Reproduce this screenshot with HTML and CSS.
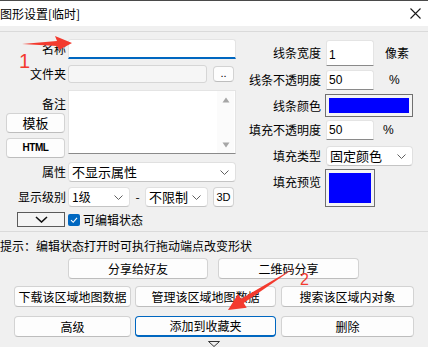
FILE: index.html
```html
<!DOCTYPE html>
<html lang="zh-CN">
<head>
<meta charset="utf-8">
<title>图形设置[临时]</title>
<link rel="stylesheet" href="styles.css">
</head>
<body>
<div class="window">
  <div class="titlebar">
    <span class="title">图形设置[临时]</span>
    <svg class="close" width="11" height="11" viewBox="0 0 11 11"><path d="M0.5 0.5L10.5 10.5M10.5 0.5L0.5 10.5" stroke="#1a1a1a" stroke-width="1.1" fill="none"/></svg>
  </div>
  <div class="content">
    <div class="group">
      <div class="left">
        <div class="row r-name">
          <span class="lbl">名称</span>
          <div class="field name-field"></div>
        </div>
        <div class="row r-folder">
          <span class="lbl">文件夹</span>
          <div class="field folder-field"></div>
          <button class="btn dots">..</button>
        </div>
        <div class="row r-note">
          <div class="note-side">
            <span class="lbl note-lbl">备注</span>
            <button class="btn side-btn">模板</button>
            <button class="btn side-btn html-btn">HTML</button>
          </div>
          <div class="textarea">
            <div class="ta-body"></div>
            <div class="scroll">
              <svg width="8" height="6" viewBox="0 0 8 6"><path d="M4 0.5L7.5 5.5H0.5Z" fill="#a6a6a6"/></svg>
              <svg width="8" height="6" viewBox="0 0 8 6"><path d="M4 5.5L7.5 0.5H0.5Z" fill="#a6a6a6"/></svg>
            </div>
          </div>
        </div>
        <div class="row r-attr">
          <span class="lbl">属性</span>
          <div class="select attr-select"><span>不显示属性</span><svg class="chev" width="9" height="5" viewBox="0 0 9 5"><path d="M0.5 0.5L4.5 4.5L8.5 0.5" stroke="#606060" fill="none"/></svg></div>
        </div>
        <div class="row r-level">
          <span class="lbl">显示级别</span>
          <div class="select level-select"><span>1级</span><svg class="chev" width="9" height="5" viewBox="0 0 9 5"><path d="M0.5 0.5L4.5 4.5L8.5 0.5" stroke="#606060" fill="none"/></svg></div>
          <span class="dash">-</span>
          <div class="select limit-select"><span>不限制</span><svg class="chev" width="9" height="5" viewBox="0 0 9 5"><path d="M0.5 0.5L4.5 4.5L8.5 0.5" stroke="#606060" fill="none"/></svg></div>
          <button class="btn btn-3d">3D</button>
        </div>
        <div class="row r-edit">
          <button class="toggle"><svg width="13" height="7" viewBox="0 0 13 7"><path d="M1 1L6.5 6L12 1" stroke="#111" stroke-width="1.6" fill="none"/></svg></button>
          <span class="check"><svg width="12" height="12" viewBox="0 0 12 12"><path d="M3 6.2L5.2 8.3L9 3.8" stroke="#fff" stroke-width="1.1" fill="none"/></svg></span>
          <span class="check-lbl">可编辑状态</span>
        </div>
      </div>
      <div class="right">
        <div class="rrow rr1">
          <span class="rlbl">线条宽度</span>
          <div class="field num tall">1</div>
          <span class="unit u-px">像素</span>
        </div>
        <div class="rrow rr2">
          <span class="rlbl">线条不透明度</span>
          <div class="field num">50</div>
          <span class="unit u-pct1">%</span>
        </div>
        <div class="rrow rr3">
          <span class="rlbl">线条颜色</span>
          <div class="swatch color-swatch"><div class="fill"></div></div>
        </div>
        <div class="rrow rr4">
          <span class="rlbl">填充不透明度</span>
          <div class="field num">50</div>
          <span class="unit u-pct2">%</span>
        </div>
        <div class="rrow rr5">
          <span class="rlbl">填充类型</span>
          <div class="select type-select"><span>固定颜色</span><svg class="chev" width="9" height="5" viewBox="0 0 9 5"><path d="M0.5 0.5L4.5 4.5L8.5 0.5" stroke="#606060" fill="none"/></svg></div>
        </div>
        <div class="rrow rr6">
          <span class="rlbl preview-lbl">填充预览</span>
          <div class="swatch preview-swatch"><div class="fill"></div></div>
        </div>
      </div>
    </div>
    <div class="hint">提示：编辑状态打开时可执行拖动端点改变形状</div>
    <div class="btn-row row1">
      <button class="btn b-share">分享给好友</button>
      <button class="btn b-qr">二维码分享</button>
    </div>
    <div class="btn-row row2">
      <button class="btn c1">下载该区域地图数据</button>
      <button class="btn c2">管理该区域地图数据</button>
      <button class="btn c3">搜索该区域内对象</button>
    </div>
    <div class="btn-row row3">
      <button class="btn c1">高级</button>
      <button class="btn c2 focused">添加到收藏夹</button>
      <button class="btn c3">删除</button>
    </div>
    <svg class="more" width="12" height="6" viewBox="0 0 12 6"><path d="M0.5 0.5H11.5L6 5.5Z" stroke="#333" fill="none"/></svg>
  </div>

  <svg class="annot" width="428" height="347" viewBox="0 0 428 347">
    <polygon points="22,44 57,41 55,36 72,43 59,50 57,46" fill="#f33a2e"/>
    <polygon points="296,267 241.1,298.8 238.1,294.1 228,310 246.7,307.7 243.7,303" fill="#f33a2e"/>
  </svg>
  <span class="mark mark1">1</span>
  <span class="mark mark2">2</span>
</div>
</body>
</html>
```

FILE: styles.css
```css
* { box-sizing: border-box; }
html, body { margin: 0; padding: 0; }
body {
  width: 428px;
  height: 347px;
  overflow: hidden;
  background: #f0f0f0;
  font-family: "Noto Sans CJK SC", "Noto Sans", sans-serif;
  font-size: 12px;
  color: #000;
}
.window { position: relative; width: 428px; height: 347px; background: #f0f0f0; }

.titlebar {
  height: 26px;
  background: #fff;
  border-top: 1px solid #4a4a4a;
  display: flex;
  align-items: center;
  justify-content: space-between;
  padding-right: 7px;
}
.title { line-height: 16px; }
.close { display: block; }

.content { padding-top: 5px; }
.group {
  display: flex;
  height: 201px;
  border-top: 1px solid #dadada;
  border-bottom: 1px solid #dadada;
}

.left { width: 240px; padding-top: 7px; display: flex; flex-direction: column; flex: none; }
.row { display: flex; align-items: center; }
.lbl { width: 66px; margin-right: 2px; text-align: right; line-height: 16px; flex: none; }

.field {
  height: 20px;
  background: #fff;
  border: 1px solid #e4e4e4;
  border-bottom-color: #8a8a8a;
  border-radius: 3px 3px 0 0;
  padding: 0 3px;
  line-height: 18px;
  flex: none;
}
.name-field { width: 168px; border-bottom: 2px solid #0067c0; }
.r-folder { margin-top: 6px; height: 18px; }
.folder-field { width: 139px; height: 18px; background: #f6f6f6; border: 1px solid #d6d6d6; border-radius: 3px; }

.btn {
  font-family: inherit;
  font-size: 12px;
  color: #000;
  background: #fdfdfd;
  border: 1px solid #d3d3d3;
  border-bottom-color: #bdbdbd;
  border-radius: 4px;
  padding: 0;
  line-height: 16px;
  display: flex;
  align-items: center;
  justify-content: center;
  flex: none;
  white-space: nowrap;
}
.dots { width: 21px; height: 16px; margin-left: 6px; font-family: "Liberation Sans", sans-serif; font-size: 11px; padding-bottom: 3px; }

.r-note { margin-top: 7px; align-items: flex-start; }
.note-side { width: 68px; height: 68px; display: flex; flex-direction: column; flex: none; }
.note-lbl { padding-top: 6px; height: 22px; line-height: 16px; }
.side-btn { width: 59px; height: 20px; margin-left: 6px; margin-top: 1px; font-size: 13px; }
.html-btn {
  margin-top: 5px;
  font-family: "Liberation Sans", sans-serif;
  font-size: 10px;
  letter-spacing: -0.5px;
  font-weight: bold;
}
.textarea {
  width: 168px;
  height: 64px;
  background: #fff;
  border: 1px solid #e4e4e4;
  border-bottom-color: #8a8a8a;
  display: flex;
  flex: none;
}
.ta-body { flex: 1; }
.scroll {
  width: 17px;
  margin-right: 1px;
  background: #fbfbfb;
  display: flex;
  flex-direction: column;
  justify-content: space-between;
  align-items: center;
  padding: 6px 0 5px;
}
.scroll svg { display: block; }

.select {
  height: 20px;
  background: #fff;
  border: 1px solid #e0e0e0;
  border-bottom-color: #c4c4c4;
  border-radius: 4px;
  display: flex;
  align-items: center;
  justify-content: space-between;
  padding: 0 6px 0 3px;
  line-height: 16px;
  flex: none;
}
.select span { white-space: nowrap; }
.chev { display: block; flex: none; }
.r-attr { margin-top: 4px; }
.attr-select { width: 168px; font-size: 13px; }
.r-level { margin-top: 5px; }
.level-select { width: 62px; padding-left: 3px; }
.dash { width: 15px; text-align: center; line-height: 16px; }
.limit-select { width: 63px; font-size: 13px; }
.btn-3d {
  width: 21px;
  height: 20px;
  margin-left: 5px;
  font-family: "Liberation Sans", sans-serif;
  font-size: 11px;
}

.r-edit { margin-top: 5px; height: 15px; }
.toggle {
  width: 48px;
  height: 15px;
  margin-left: 17px;
  background: #f4f4f4;
  border: 1px solid #5a5a5a;
  padding: 0;
  display: flex;
  align-items: center;
  justify-content: center;
  flex: none;
}
.toggle svg { display: block; }
.check {
  width: 12px;
  height: 12px;
  margin-left: 3px;
  background: #0067c0;
  border-radius: 2px;
  display: flex;
  flex: none;
}
.check svg { display: block; }
.check-lbl { margin-left: 3px; line-height: 16px; }

.right { flex: 1; padding-top: 8px; display: flex; flex-direction: column; }
.rrow { display: flex; align-items: center; }
.rlbl { width: 81px; margin-right: 5px; text-align: right; line-height: 16px; flex: none; white-space: nowrap; }
.num {
  width: 48px;
  font-family: "Liberation Sans", sans-serif;
  font-size: 12px;
  line-height: 18px;
  padding-left: 2px;
}
.tall { height: 26px; padding-top: 5px; }
.unit { line-height: 16px; }
.u-px { margin-left: 11px; }
.u-pct1 { margin-left: 15px; font-family: "Liberation Sans", sans-serif; }
.u-pct2 { margin-left: 9px; font-family: "Liberation Sans", sans-serif; }
.rr2 { margin-top: 4px; }
.rr3 { margin-top: 4px; }
.rr4 { margin-top: 3px; }
.rr5 { margin-top: 6px; }
.rr6 { margin-top: 3px; align-items: flex-start; }
.preview-lbl { padding-top: 5px; }

.swatch {
  border: 1px solid #707070;
  padding: 3px;
  background: #f4f4f4;
  flex: none;
}
.swatch .fill { width: 100%; height: 100%; background: #0000ff; }
.color-swatch { width: 88px; height: 23px; margin-left: -1px; }
.preview-swatch { width: 50px; height: 38px; margin-left: -1px; }
.type-select { width: 87px; font-size: 13px; }

.hint { margin-top: 6px; line-height: 16px; white-space: nowrap; }

.btn-row { display: flex; }
.btn-row .btn { height: 21px; }
.row1 { margin-top: 4px; padding-left: 68px; }
.b-share { width: 140px; }
.b-qr { width: 141px; margin-left: 10px; }
.row2 { margin-top: 7px; padding-left: 14px; }
.row3 { margin-top: 9px; padding-left: 14px; }
.c1 { width: 117px; }
.c2 { width: 141px; margin-left: 4px; }
.c3 { width: 133px; margin-left: 5px; }
.focused { border: 1px solid #0067c0; border-bottom-width: 2px; }

.more { display: block; margin: 4px 0 0 208px; }

.annot { position: absolute; left: 0; top: 0; pointer-events: none; }
.mark {
  position: absolute;
  color: #f33a2e;
  font-family: "Liberation Sans", sans-serif;
  line-height: 1;
}
.mark1 { left: 19px; top: 51px; font-size: 20px; }
.mark2 { left: 300px; top: 272px; font-size: 16px; }
```
